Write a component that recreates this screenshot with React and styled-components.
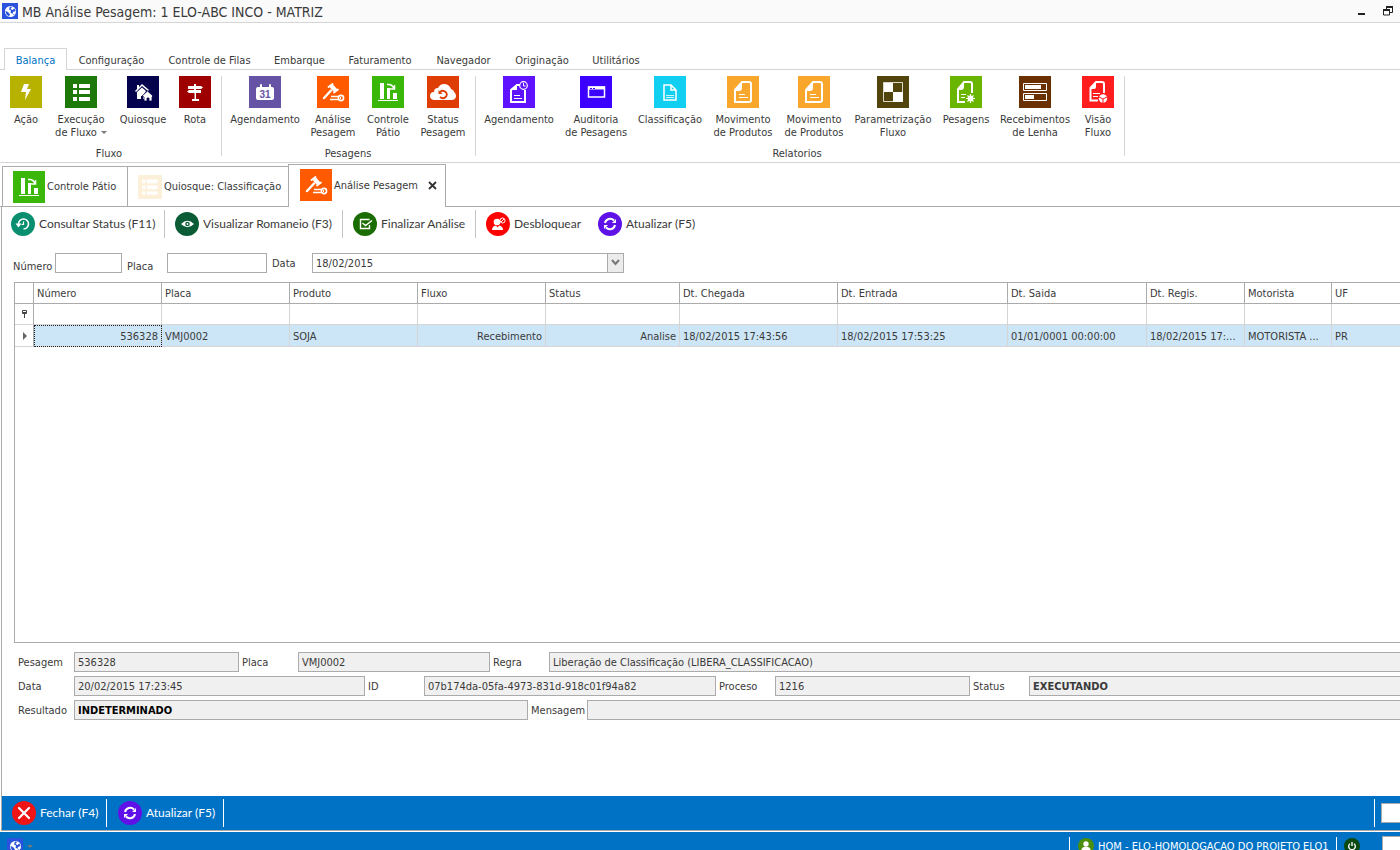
import React from "react";
import styled, { createGlobalStyle, css } from "styled-components";

const ui = '"DejaVu Sans Condensed", "DejaVu Sans", sans-serif';
const humanist = 'Lato, "Open Sans", sans-serif';
const blue = "#0072c6";
const line = "#ababab";
const soft = "#d5d5d5";

const GlobalStyle = createGlobalStyle`
  * { box-sizing: border-box; }
  body { margin: 0; background: #fff; color: #3a3a3a; font: 11px/13px ${ui}; overflow: hidden; }
  button, input, select { font: inherit; color: inherit; margin: 0; border-radius: 0; }
  button { background: none; border: 0; padding: 0; }
  svg { display: block; flex: none; }
`;

const Window = styled.div`
  display: flex;
  flex-direction: column;
  height: 100vh;
`;
const TitleBar = styled.header`
  display: flex;
  align-items: center;
  gap: 4px;
  height: 23px;
  flex: none;
  padding: 0 6px 0 2px;
  background: #fafafa;
  border-bottom: 1px solid ${soft};
`;
const Title = styled.h1`
  margin: 0;
  flex: 1;
  padding-top: 2px;
  font-size: 14px;
  line-height: 20px;
  font-weight: 400;
`;
const WindowButtons = styled.div`
  display: flex;
  gap: 16px;
`;

const RibbonTabs = styled.nav`
  display: flex;
  flex: none;
  height: 47px;
  padding: 25px 0 0 4px;
  border-bottom: 1px solid ${soft};
`;
const RibbonTab = styled.button`
  width: ${(p) => p.$w}px;
  height: 22px;
  padding-top: 2px;
  white-space: nowrap;
  ${(p) =>
    p.$active &&
    css`
      color: ${blue};
      background: #fff;
      border: 1px solid ${soft};
      border-bottom: 0;
    `}
`;
const Ribbon = styled.div`
  display: flex;
  flex: none;
  height: 93px;
  padding: 6px 0;
  border-bottom: 1px solid ${soft};
`;
const RibbonGroup = styled.section`
  display: flex;
  flex-direction: column;
  justify-content: space-between;
  padding: 0 ${(p) => p.$right}px 0 ${(p) => p.$left}px;
  border-right: 1px solid ${soft};
`;
const RibbonItems = styled.div`
  display: flex;
  align-items: flex-start;
`;
const RibbonButton = styled.button`
  display: flex;
  flex-direction: column;
  align-items: center;
  gap: 5px;
  width: ${(p) => p.$w}px;
  text-align: center;
  white-space: nowrap;
  line-height: 13px;
`;
const GroupName = styled.div`
  padding-right: 6px;
  text-align: center;
  line-height: 12px;
  margin-bottom: -4px;
`;
const Caret = styled.i`
  display: inline-block;
  margin-left: 4px;
  vertical-align: 2px;
  border: 3px solid transparent;
  border-top-color: #777;
  border-bottom: 0;
`;

const DocTabs = styled.div`
  display: flex;
  align-items: flex-end;
  flex: none;
  height: 44px;
  padding-left: 2px;
  background: linear-gradient(${line}, ${line}) bottom / 100% 1px no-repeat;
`;
const DocTab = styled.button`
  display: flex;
  align-items: center;
  gap: 2px;
  width: ${(p) => p.$w}px;
  height: ${(p) => (p.$active ? 43 : 41)}px;
  padding: 0 0 ${(p) => (p.$active ? 2 : 0)}px 10px;
  border: 1px solid ${line};
  margin-right: -1px;
  white-space: nowrap;
  ${(p) => p.$active && "padding-left: 11px; border-bottom: 0; background: #fff; z-index: 1;"}
`;
const CloseMark = styled.span`
  margin: 0 8px 0 auto;
`;

const Main = styled.main`
  display: flex;
  flex-direction: column;
  flex: 1;
  min-height: 0;
  margin-left: 1px;
  border-left: 1px solid ${line};
  border-bottom: 1px solid ${line};
`;
const Toolbar = styled.div`
  display: flex;
  align-items: center;
  height: 34px;
  flex: none;
  padding: ${(p) => (p.$footer ? "0 0 0 10px" : "0 0 0 9px")};
  ${(p) => p.$footer && `background: ${blue}; color: #fff;`}
`;
const ToolButton = styled.button`
  display: flex;
  align-items: center;
  gap: 4px;
  width: ${(p) => p.$w}px;
  font: 12px/24px ${humanist};
  white-space: nowrap;
`;
const Rule = styled.span`
  width: 1px;
  height: 28px;
  margin-right: ${(p) => p.$after ?? 10}px;
  background: ${(p) => (p.$light ? "#fff" : "#c4c4c4")};
`;
const Filters = styled.form`
  display: flex;
  align-items: center;
  flex: none;
  gap: 5px;
  height: 20px;
  margin: 12px 0 9px 11px;
`;
const FilterLabel = styled.label`
  width: ${(p) => p.$w}px;
  padding-top: ${(p) => (p.$low ? 6 : 0)}px;
  line-height: 15px;
`;
const Field = styled.input`
  width: ${(p) => (p.$w ? p.$w + "px" : "100%")};
  height: 20px;
  min-width: 0;
  padding: 0 4px 0 3px;
  border: 1px solid ${line};
  background: ${(p) => (p.readOnly ? "#f0f0f0" : "#fff")};
  font-weight: ${(p) => (p.$bold ? 700 : 400)};
  color: ${(p) => (p.$black ? "#000" : "inherit")};
  outline: 0;
`;
const DateBox = styled.div`
  display: grid;
  grid-template-columns: 1fr 16px;
  width: 312px;
  height: 20px;
  margin-left: 2px;
  border: 1px solid ${line};
`;
const DateSelect = styled.select`
  grid-area: 1 / 1 / 2 / 3;
  appearance: none;
  border: 0;
  background: none;
  padding: 0 3px;
  outline: 0;
`;
const DateArrow = styled.span`
  grid-area: 1 / 2;
  display: grid;
  place-items: center;
  pointer-events: none;
  background: #ececec;
  border-left: 1px solid ${line};
`;

const GridBox = styled.div`
  flex: 1;
  min-height: 0;
  overflow: hidden;
  margin-left: 12px;
  border: 1px solid ${line};
  border-right: 0;
`;
const Table = styled.table`
  width: 100%;
  table-layout: fixed;
  border-collapse: separate;
  border-spacing: 0;
  & tr > :last-child { border-right: 0; }
`;
const Th = styled.th`
  height: 21px;
  padding: 0 3px;
  text-align: left;
  font-weight: 400;
  border-right: 1px solid ${line};
  border-bottom: 1px solid ${line};
`;
const Td = styled.td`
  height: ${(p) => (p.$data ? 22 : 21)}px;
  padding: ${(p) => (p.$filter ? 0 : p.$data && !p.$head ? "2px 3px 0" : "0 3px 0 4px")};
  overflow: hidden;
  white-space: nowrap;
  text-align: ${(p) => (p.$right ? "right" : "left")};
  border-right: 1px solid ${(p) => (p.$head ? line : soft)};
  border-bottom: 1px solid ${soft};
  background: ${(p) => (p.$data && !p.$head ? "#cde6f7" : "#fff")};
  ${(p) => p.$focus && "outline: 1px dotted #222; outline-offset: -1px;"}
`;
const FilterInput = styled.input`
  display: block;
  width: 100%;
  height: 20px;
  border: 0;
  outline: 0;
  background: none;
`;

const Details = styled.section`
  display: flex;
  flex-direction: column;
  flex: none;
  gap: 4px;
  height: 153px;
  padding: 9px 0 0 16px;
`;
const DetailRow = styled.div`
  display: grid;
  grid-template-columns: ${(p) => p.$cols};
  align-items: center;
  margin-right: -2px;
`;
const DetailLabel = styled.label`
  padding-left: ${(p) => (p.$first ? 0 : 3)}px;
`;

const FooterBox = styled.input`
  width: ${(p) => p.$w}px;
  height: 20px;
  border: 1px solid ${line};
  border-right: 0;
  background: #fff;
`;
const Grow = styled.span`
  flex: 1;
`;
const StatusBar = styled.footer`
  flex: none;
  height: 19px;
  overflow: hidden;
  border-top: 1px solid #fff;
  background: ${blue};
  color: #fff;
`;
const StatusItems = styled.div`
  display: flex;
  align-items: center;
  height: 28px;
  padding-left: 7px;
`;
const StatusRule = styled(Rule)`
  height: 18px;
`;
const StatusText = styled.span`
  width: 238px;
  margin-left: 4px;
  white-space: nowrap;
`;
const PowerButton = styled.button`
  margin-right: 22px;
`;

/* ---------- icons ---------- */
const w = "#fff";
const glyphs = {
  bolt: <path fill={w} d="M14 8h5l-2 5h4l-6 11 1-8h-5z" />,
  list: (
    <path fill={w} d="M8 8h4v4H8zM14 8h11v4H14zM8 14h4v4H8zM14 14h11v4H14zM8 21h4v4H8zM14 21h11v4H14z" />
  ),
  houses: (
    <g>
      <path fill={w} d="M10 9h2v2l3-3 7 6-1 1-6-5-6 6-1-1 2-2z" />
      <path fill={w} d="M10 16l5-4.500 4 3.500-2 3v5h-1v-3h-2v3h-4z" />
      <path fill={w} stroke="#04024d" strokeWidth=".8" d="M15 20l5.500-5 5.500 5-1 1v4h-3v-3h-2v3h-3v-4z" />
    </g>
  ),
  sign: (
    <path fill={w} d="M15 8h2v2h5l2 1.500-2 1.500H9v-3h6zM15 13h2v1h5v3H10l-2-1.500L10 14h5zM15.500 17h1.500v6h3v2h-7v-2h2.500z" />
  ),
  calendar: (
    <g>
      <path fill={w} d="M7 13q0-2 2-2h14q2 0 2 2v9q0 2-2 2H9q-2 0-2-2z" />
      <path stroke={w} strokeWidth="2" strokeLinecap="round" d="M12 9v3M21 9v3" />
      <text x="16" y="22" textAnchor="middle" fontFamily="Liberation Sans" fontWeight="700" fontSize="10" fill="#6653a5">31</text>
    </g>
  ),
  gavel: (
    <g stroke={w} fill="none">
      <path fill={w} stroke="none" d="M12.500 11l3.500-2.500 4.500 5-3.500 2.500z" />
      <path strokeWidth="1.800" strokeLinecap="round" d="M11.500 11l4-3M17 16.500l4-3" />
      <path strokeWidth="2.400" strokeLinecap="round" d="M14 14.500l-7 7.500" />
      <path strokeWidth="1.500" d="M14 20.500h7M13 23.500h8" />
      <circle cx="24" cy="22" r="2.600" strokeWidth="1.600" />
      <path d="M23.500 21v2" />
    </g>
  ),
  bars: (
    <g fill={w}>
      <path d="M8 7h4v16H8zM15 12h3v11h-3zM21 17h4v6h-4zM6 24h20v1H6z" />
      <path fill="none" stroke={w} strokeWidth="1.500" d="M15 8.500h2q3 0 5 4M22.500 9v4H18" />
    </g>
  ),
  cloud: (
    <g>
      <path fill={w} d="M8 24q-5 0-5-4 0-4 4-4 0-4 4-4 2-4 6-4 5 0 7 5 3 1 3 3 2 1 2 4 0 4-5 4z" />
      <path fill="none" stroke="#df3d06" strokeWidth="1.800" d="M13 16a4 3.500 0 1 1 0 5" />
      <path fill="#df3d06" d="M11.500 14v4h4z" />
    </g>
  ),
  docClock: (
    <g fill="none" stroke={w}>
      <path strokeWidth="2" d="M17 9h-3l-6 5v12h14V14" />
      <path fill={w} stroke="none" d="M7 14l7-6v6z" />
      <circle cx="20.500" cy="9.500" r="3.800" strokeWidth="1.200" />
      <path d="M20.500 7v3h2M11 19.500h6M11 22.500h8" />
    </g>
  ),
  windowIcon: (
    <g>
      <path fill="none" stroke={w} strokeWidth="1.500" d="M8.500 11h16v10h-16z" />
      <path stroke={w} strokeWidth="3" d="M8 12h17" />
      <path stroke="#3b00ff" strokeWidth="1" strokeDasharray="2 1" d="M10 12.500h6" />
    </g>
  ),
  docSmall: (
    <g fill="none" stroke={w}>
      <path strokeWidth="1.500" d="M10 9h7l5 5v10H10zM17 9v5h5" />
      <path d="M12 19.500h8M12 21.500h8" opacity=".8" />
    </g>
  ),
  doc: (
    <g fill="none" stroke={w}>
      <path strokeWidth="2" d="M15 6h7q2 0 2 2v16q0 2-2 2H8V14z" />
      <path fill={w} stroke="none" d="M8 15l7-9v6q0 3-3 3z" />
      <path d="M12 18.500h6M12 21.500h9" />
    </g>
  ),
  checker: (
    <g>
      <path fill={w} d="M7 7h9v9H7zM16 16h10v10H16z" />
      <path fill="none" stroke={w} strokeWidth=".8" d="M6.500 6.500h19v19h-19z" />
    </g>
  ),
  docSun: (
    <g fill="none" stroke={w}>
      <path strokeWidth="2" d="M15 26H8V13l6-7h6q2 0 2 2v9" />
      <path fill={w} stroke="none" d="M8 14l6-8v5q0 3-3 3z" />
      <path d="M11 18.500h5M11 21.500h4" />
      <path strokeWidth="1.200" d="M20.500 18v9M16 22.500h9M17.500 19.500l6 6M23.500 19.500l-6 6" />
      <circle cx="20.500" cy="22.500" r="2.500" fill={w} />
    </g>
  ),
  progress: (
    <g>
      <path fill="none" stroke={w} d="M4.500 7.500h23v7h-23zM4.500 17.500h23v7h-23z" />
      <path fill={w} d="M6 9h16v4H6zM6 19h9v4H6z" />
    </g>
  ),
  docPie: (
    <g fill="none" stroke={w}>
      <path strokeWidth="2" d="M16 24.500H8.500V12L14 6h6q2 0 2 2v9" />
      <path fill={w} stroke="none" d="M8 13l6-7v5q0 2-2 2z" />
      <path d="M11 17.500h7M11 20.500h5" />
      <circle cx="21" cy="22.500" r="4.200" fill={w} stroke="none" />
      <path stroke="#ff1d1d" d="M21 27v-4l-4-2M21 23l4-2" />
    </g>
  ),
  paleList: (
    <path fill={w} d="M6 6h4v5H6zM12 6h14v5H12zM6 14h4v5H6zM12 14h14v5H12zM6 22h4v4H6zM12 22h14v4H12z" />
  ),
};
const Tile = ({ name, color, size = 32 }) => (
  <svg width={size} height={size} viewBox="0 0 32 32" aria-hidden="true">
    <path fill={color} d="M0 0h32v32H0z" />
    {glyphs[name]}
  </svg>
);

const rounds = {
  history: (
    <g fill="none" stroke={w} strokeWidth="1.600">
      <path d="M7.500 12a5 5 0 1 1 5 5" />
      <path fill={w} stroke="none" d="M4.500 11.500h6l-3 4z" />
      <path strokeWidth="1.200" d="M12.500 9.500v3h-2" />
    </g>
  ),
  eye: (
    <g>
      <path fill={w} d="M6 12q6.500-6.500 13 0-6.500 6.500-13 0z" />
      <circle cx="12.500" cy="12" r="2.300" fill="#0a5c36" />
      <circle cx="12.500" cy="12" r=".9" fill={w} />
    </g>
  ),
  check: (
    <path fill="none" stroke={w} strokeWidth="1.400" d="M16.500 13v3.500h-9v-9h9M9.500 11l3 2.500 6.500-5" />
  ),
  blocked: (
    <g>
      <circle cx="11" cy="10" r="3.300" fill={w} />
      <path fill={w} d="M6 18q0-4 4-4.500l1.500 2 1.500-2q4 .5 4 4.500z" />
      <circle cx="16.500" cy="8.500" r="2.500" fill="#f00" stroke={w} />
      <path stroke={w} d="M15 10l3-3" />
    </g>
  ),
  refresh: (
    <g fill="none" stroke={w} strokeWidth="2">
      <path d="M7 11a5.200 5.200 0 0 1 9-2.500M17 13a5.200 5.200 0 0 1-9 2.500" />
      <path fill={w} stroke="none" d="M18 7v4h-4zM6 17v-4h4z" />
    </g>
  ),
  close: <path stroke={w} strokeWidth="2.200" strokeLinecap="round" d="M7 7l10 10M17 7L7 17" />,
  user: (
    <g fill={w}>
      <circle cx="12" cy="9" r="4" />
      <path d="M5 19q0-6 7-6t7 6z" />
    </g>
  ),
  power: (
    <path fill="none" stroke={w} strokeWidth="2" d="M9 8.500a5 5 0 1 0 6 0M12 6v6" />
  ),
};
const Round = ({ name, color, size = 24 }) => (
  <svg width={size} height={size} viewBox="0 0 24 24" aria-hidden="true">
    <circle cx="12" cy="12" r="12" fill={color} />
    {rounds[name]}
  </svg>
);
const Globe = () => (
  <svg width="16" height="16" viewBox="0 0 16 16" aria-hidden="true">
    <path fill="#2a52dc" d="M0 0h16v16H0z" />
    <circle cx="8.500" cy="8.500" r="5.500" fill={w} />
    <path fill="#2a52dc" d="M8 3.500l2 .5-1.500 2 2 1 2-1.500 1 2.500-2.500 1-.5 2-2-1.500.500-2-2-1zM3.500 8l2.500 1 2 2.500-1 2-2.500-2zM11 11.500l1.500-.5-.500 1.500z" />
  </svg>
);

/* ---------- data ---------- */
const ribbonTabs = [
  ["Balança", 63], ["Configuração", 89], ["Controle de Filas", 107], ["Embarque", 73],
  ["Faturamento", 88], ["Navegador", 79], ["Originação", 78], ["Utilitários", 70],
];
const groups = [
  {
    name: "Fluxo", left: 5, right: 2,
    items: [
      ["Ação", "", "bolt", "#b7b100", 42],
      ["Execução", "de Fluxo", "list", "#1d7a0a", 68],
      ["Quiosque", "", "houses", "#04024d", 56],
      ["Rota", "", "sign", "#9e0000", 48],
    ],
  },
  {
    name: "Pesagens", left: 6, right: 1,
    items: [
      ["Agendamento", "", "calendar", "#6653a5", 74],
      ["Análise", "Pesagem", "gavel", "#ff5a00", 62],
      ["Controle", "Pátio", "bars", "#3bb70a", 48],
      ["Status", "Pesagem", "cloud", "#df3d06", 62],
    ],
  },
  {
    name: "Relatorios", left: 6, right: 6,
    items: [
      ["Agendamento", "", "docClock", "#5e12ff", 74],
      ["Auditoria", "de Pesagens", "windowIcon", "#3b00ff", 80],
      ["Classificação", "", "docSmall", "#11cff0", 68],
      ["Movimento", "de Produtos", "doc", "#f8a72c", 78],
      ["Movimento", "de Produtos", "doc", "#f8a72c", 64],
      ["Parametrização", "Fluxo", "checker", "#51450d", 94],
      ["Pesagens", "", "docSun", "#69b500", 52],
      ["Recebimentos", "de Lenha", "progress", "#6b3000", 86],
      ["Visão", "Fluxo", "docPie", "#ff1d1d", 40],
    ],
  },
];
const columns = [
  ["Número", 128, "536328", true],
  ["Placa", 128, "VMJ0002"],
  ["Produto", 128, "SOJA"],
  ["Fluxo", 128, "Recebimento", true],
  ["Status", 134, "Analise", true],
  ["Dt. Chegada", 158, "18/02/2015 17:43:56"],
  ["Dt. Entrada", 170, "18/02/2015 17:53:25"],
  ["Dt. Saida", 139, "01/01/0001 00:00:00"],
  ["Dt. Regis.", 98, "18/02/2015 17:..."],
  ["Motorista", 87, "MOTORISTA ..."],
  ["UF", null, "PR"],
];
const details = [
  {
    cols: "56px 165px 59px 192px 59px 1fr",
    fields: [["Pesagem", "536328"], ["Placa", "VMJ0002"], ["Regra", "Liberação de Classificação (LIBERA_CLASSIFICACAO)"]],
  },
  {
    cols: "56px 291px 59px 292px 59px 195px 59px 1fr",
    fields: [
      ["Data", "20/02/2015 17:23:45"],
      ["ID", "07b174da-05fa-4973-831d-918c01f94a82"],
      ["Proceso", "1216"],
      ["Status", "EXECUTANDO", "bold"],
    ],
  },
  {
    cols: "56px 454px 59px 1fr",
    fields: [["Resultado", "INDETERMINADO", "black"], ["Mensagem", ""]],
  },
];

export default function App() {
  return (
    <Window>
      <GlobalStyle />
      <TitleBar>
        <Globe />
        <Title>MB Análise Pesagem: 1 ELO-ABC INCO - MATRIZ</Title>
        <WindowButtons>
          <button aria-label="Minimizar">
            <svg width="10" height="12" viewBox="0 0 10 12"><path fill="#222" d="M2 8h7v2H2z" /></svg>
          </button>
          <button aria-label="Restaurar">
            <svg width="12" height="12" viewBox="0 0 12 12">
              <path fill="none" stroke="#222" d="M4.500 4V2.500h6v5H8M1.500 5.500h6v4.500h-6z" />
              <path fill="#222" d="M4 1h7v2H4zM1 4h7v2H1z" />
            </svg>
          </button>
        </WindowButtons>
      </TitleBar>

      <RibbonTabs>
        {ribbonTabs.map(([t, width], i) => (
          <RibbonTab key={t} $w={width} $active={i === 0}>{t}</RibbonTab>
        ))}
      </RibbonTabs>
      <Ribbon>
        {groups.map((g) => (
          <RibbonGroup key={g.name} $left={g.left} $right={g.right}>
            <RibbonItems>
              {g.items.map(([a, b, icon, color, width], i) => (
                <RibbonButton key={i} $w={width}>
                  <Tile name={icon} color={color} />
                  <span>
                    {a}
                    {b && <><br />{b}</>}
                    {a === "Execução" && <Caret />}
                  </span>
                </RibbonButton>
              ))}
            </RibbonItems>
            <GroupName>{g.name}</GroupName>
          </RibbonGroup>
        ))}
      </Ribbon>

      <DocTabs>
        <DocTab $w={126}><Tile name="bars" color="#3bb70a" />Controle Pátio</DocTab>
        <DocTab $w={162}><Tile name="paleList" color="#fcf0da" size={24} />Quiosque: Classificação</DocTab>
        <DocTab $w={158} $active>
          <Tile name="gavel" color="#ff5a00" />Análise Pesagem
          <CloseMark>
            <svg width="9" height="9" viewBox="0 0 9 9"><path stroke="#333" strokeWidth="1.800" d="M1 1l7 7M8 1L1 8" /></svg>
          </CloseMark>
        </DocTab>
      </DocTabs>

      <Main>
        <Toolbar>
          <ToolButton $w={153}><Round name="history" color="#088f70" />Consultar Status (F11)</ToolButton>
          <Rule />
          <ToolButton $w={167}><Round name="eye" color="#0a5c36" />Visualizar Romaneio (F3)</ToolButton>
          <Rule />
          <ToolButton $w={122}><Round name="check" color="#1c6c04" />Finalizar Análise</ToolButton>
          <Rule />
          <ToolButton $w={112}><Round name="blocked" color="#ff0000" />Desbloquear</ToolButton>
          <ToolButton $w={110}><Round name="refresh" color="#5e12e8" />Atualizar (F5)</ToolButton>
        </Toolbar>

        <Filters>
          <FilterLabel $w={37} $low htmlFor="f-num">Número</FilterLabel>
          <Field id="f-num" $w={67} />
          <FilterLabel $w={35} $low htmlFor="f-placa">Placa</FilterLabel>
          <Field id="f-placa" $w={100} />
          <FilterLabel $w={33} htmlFor="f-data">Data</FilterLabel>
          <DateBox>
            <DateSelect id="f-data"><option>18/02/2015</option></DateSelect>
            <DateArrow>
              <svg width="9" height="8" viewBox="0 0 9 8"><path fill="none" stroke="#777" strokeWidth="2" d="M1 1l3.500 4L8 1" /></svg>
            </DateArrow>
          </DateBox>
        </Filters>

        <GridBox>
          <Table>
            <colgroup>
              <col style={{ width: 19 }} />
              {columns.map(([n, width]) => <col key={n} style={width ? { width } : undefined} />)}
            </colgroup>
            <thead>
              <tr>
                <Th />
                {columns.map(([n]) => <Th key={n} scope="col">{n}</Th>)}
              </tr>
            </thead>
            <tbody>
              <tr>
                <Td $head>
                  <svg width="10" height="10" viewBox="0 0 10 10"><path fill="none" stroke="#444" d="M3.500 1.500h4M3.500 1.500v3h4v-3M4 3.500h3M5.500 5v4" /></svg>
                </Td>
                {columns.map(([n]) => (
                  <Td key={n} $filter><FilterInput aria-label={"Filtrar " + n} /></Td>
                ))}
              </tr>
              <tr>
                <Td $head $data>
                  <svg width="10" height="10" viewBox="0 0 10 10"><path fill="#666" d="M4 1l4 4-4 4z" /></svg>
                </Td>
                {columns.map(([n, , v, right], i) => (
                  <Td key={n} $data $right={right} $focus={i === 0}>{v}</Td>
                ))}
              </tr>
            </tbody>
          </Table>
        </GridBox>

        <Details>
          {details.map((row, r) => (
            <DetailRow key={r} $cols={row.cols}>
              {row.fields.map(([label, value, tone], i) => (
                <React.Fragment key={label}>
                  <DetailLabel $first={i === 0} htmlFor={`d-${r}-${i}`}>{label}</DetailLabel>
                  <Field id={`d-${r}-${i}`} readOnly value={value} $bold={tone} $black={tone === "black"} />
                </React.Fragment>
              ))}
            </DetailRow>
          ))}
        </Details>

        <Toolbar $footer>
          <ToolButton $w={94}><Round name="close" color="#f01414" />Fechar (F4)</ToolButton>
          <Rule $light $after={11} />
          <ToolButton $w={105}><Round name="refresh" color="#5e12e8" />Atualizar (F5)</ToolButton>
          <Rule $light />
          <Grow />
          <Rule $light $after={6} />
          <FooterBox $w={19} aria-label="Comando" />
        </Toolbar>
      </Main>

      <StatusBar>
        <StatusItems>
          <Globe />
          <Caret />
          <Grow />
          <StatusRule $light $after={8} />
          <Round name="user" color="#4c8f0c" size={16} />
          <StatusText>HOM - ELO-HOMOLOGACAO DO PROJETO ELO1</StatusText>
          <StatusRule $light $after={7} />
          <PowerButton aria-label="Sair"><Round name="power" color="#0a4a10" size={16} /></PowerButton>
          <FooterBox $w={18} aria-label="Consulta" />
        </StatusItems>
      </StatusBar>
    </Window>
  );
}
